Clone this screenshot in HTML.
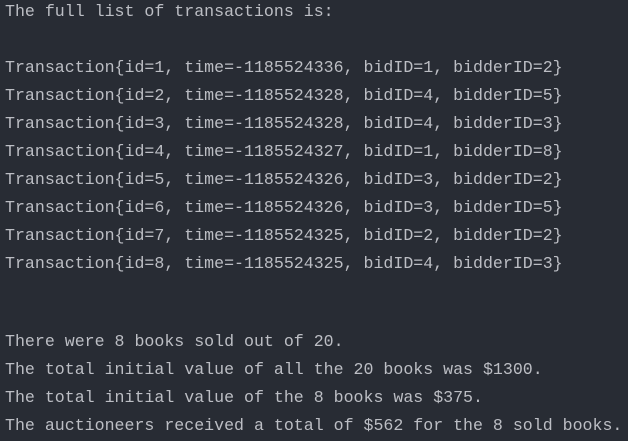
<!DOCTYPE html><html><head><style>
html,body{margin:0;padding:0;background:#282c34;width:628px;height:441px;overflow:hidden}
pre{margin:0;position:absolute;left:5px;font-family:"Liberation Mono",monospace;font-size:16.6px;line-height:28px;color:#bcbec4}
</style></head><body>
<pre style="top:-2px">The full list of transactions is:

Transaction{id=1, time=-1185524336, bidID=1, bidderID=2}
Transaction{id=2, time=-1185524328, bidID=4, bidderID=5}
Transaction{id=3, time=-1185524328, bidID=4, bidderID=3}
Transaction{id=4, time=-1185524327, bidID=1, bidderID=8}
Transaction{id=5, time=-1185524326, bidID=3, bidderID=2}
Transaction{id=6, time=-1185524326, bidID=3, bidderID=5}
Transaction{id=7, time=-1185524325, bidID=2, bidderID=2}
Transaction{id=8, time=-1185524325, bidID=4, bidderID=3}</pre>
<pre style="top:328px">There were 8 books sold out of 20.
The total initial value of all the 20 books was $1300.
The total initial value of the 8 books was $375.
The auctioneers received a total of $562 for the 8 sold books.</pre>
</body></html>
